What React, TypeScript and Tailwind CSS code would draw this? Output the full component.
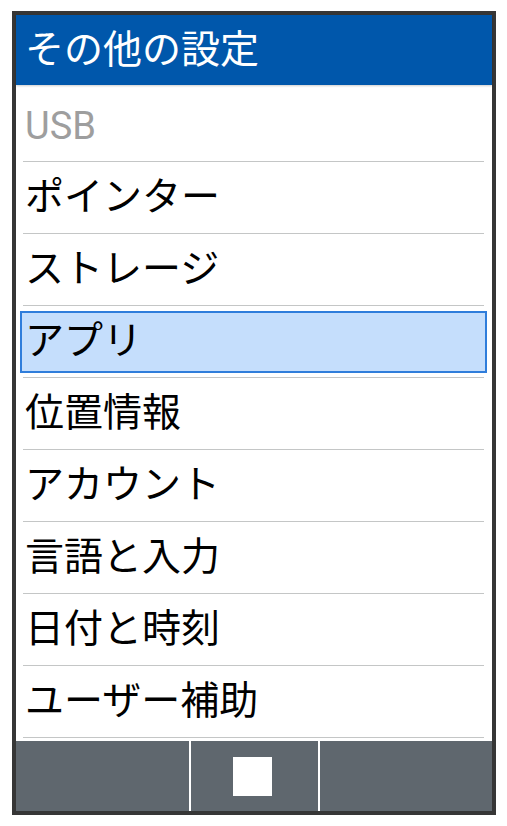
const items = [
  { label: "USB", disabled: true },
  { label: "ポインター" },
  { label: "ストレージ" },
  { label: "アプリ", selected: true },
  { label: "位置情報" },
  { label: "アカウント" },
  { label: "言語と入力" },
  { label: "日付と時刻" },
  { label: "ユーザー補助" },
];

const font = {
  fontFamily: '"Roboto", "Noto Sans CJK JP", sans-serif',
};

export default function App() {
  return (
    <div className="w-[507px] h-[826px] bg-white pt-[11px] pl-[12px]" style={font}>
      <div className="w-[484px] h-[804px] border-4 border-[#363636] flex flex-col bg-white">
        <div className="h-[70px] shrink-0 bg-[#0057ab] flex items-center pl-[9px] shadow-[0_1px_2px_rgba(0,0,0,0.2)] z-10">
          <span className="text-white text-[39px] leading-none">その他の設定</span>
        </div>
        <div className="flex flex-col ml-[7px] mr-[8px]">
          {items.map((it, i) => (
            <div
              key={it.label}
              className={`border-b border-[#c4c6c6] flex flex-col justify-center ${
                i === 0 ? "h-[77px] pt-[6px]" : "h-[72px]"
              }`}
            >
              {it.selected ? (
                <div className="-ml-[3px] -mr-[3px] h-[62px] bg-[#c5defc] border-2 border-[#2f7ddb] flex items-center pl-[3px]">
                  <span className="text-[39px] leading-none text-black">{it.label}</span>
                </div>
              ) : (
                <span
                  className={`pl-[2px] leading-none ${
                    it.disabled ? "text-[#9e9e9e] text-[38px]" : "text-black text-[39px]"
                  }`}
                >
                  {it.label}
                </span>
              )}
            </div>
          ))}
        </div>
        <div className="mt-auto h-[70px] bg-[#5f676e] flex">
          <div className="w-[173px]" />
          <div className="w-[2px] bg-white" />
          <div className="w-[127px] flex items-center justify-center">
            <div className="w-[39px] h-[39px] bg-white -ml-[4px]" />
          </div>
          <div className="w-[2px] bg-white" />
          <div className="flex-1" />
        </div>
      </div>
    </div>
  );
}
